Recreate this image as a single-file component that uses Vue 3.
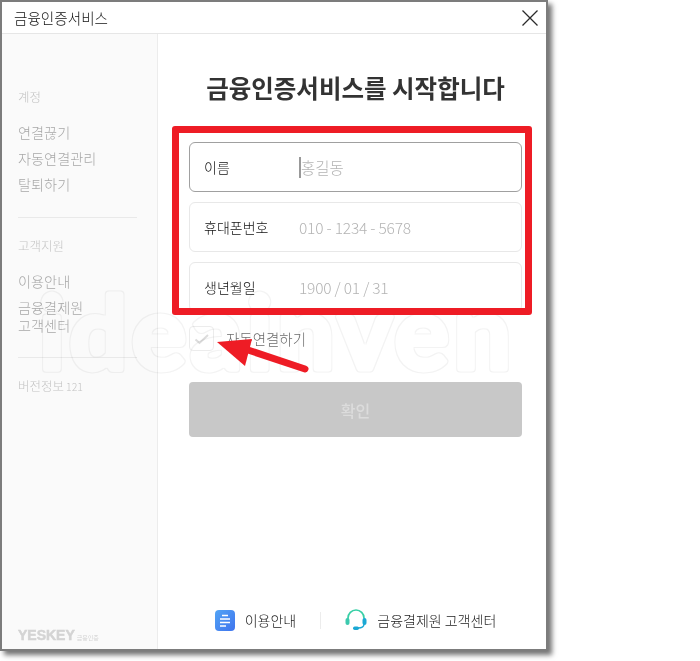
<script setup>
const fields = [
  { label: '이름', hint: '홍길동', active: true, num: false },
  { label: '휴대폰번호', hint: '010 - 1234 - 5678', active: false, num: true },
  { label: '생년월일', hint: '1900 / 01 / 31', active: false, num: true },
]
</script>

<template>
  <div class="stage">
    <div class="window">
      <header class="titlebar">
        <span class="title">금융인증서비스</span>
        <svg class="close" width="16" height="16" viewBox="0 0 16 16"><path d="M.5 .5L15.5 15.5M15.5 .5L.5 15.5" stroke="#2b2b2b" stroke-width="1.3" fill="none"/></svg>
      </header>
      <div class="body">
        <aside class="side">
          <div class="group">
            <div class="cap">계정</div>
            <ul class="links">
              <li>연결끊기</li>
              <li>자동연결관리</li>
              <li>탈퇴하기</li>
            </ul>
          </div>
          <div class="group rule">
            <div class="cap">고객지원</div>
            <ul class="links">
              <li>이용안내</li>
              <li class="two">금융결제원<br />고객센터</li>
            </ul>
          </div>
          <div class="group rule">
            <div class="cap">버전정보<small>121</small></div>
          </div>
          <div class="brand"><b>YESKEY</b><span>금융인증</span></div>
        </aside>
        <main class="main">
          <h1>금융인증서비스를 시작합니다</h1>
          <div class="fields">
            <div v-for="f in fields" :key="f.label" class="field" :class="{ active: f.active }">
              <span class="label">{{ f.label }}</span>
              <i v-if="f.active" class="caret"></i>
              <span class="hint" :class="{ num: f.num }">{{ f.hint }}</span>
            </div>
          </div>
          <label class="auto">
            <span class="box">
              <svg width="16" height="12" viewBox="0 0 16 12"><path d="M1.5 6.5L5.5 10L14 2" stroke="#dcdcdc" stroke-width="2" fill="none"/></svg>
            </span>
            <span class="autotext">자동연결하기</span>
          </label>
          <button class="ok" type="button">확인</button>
          <footer class="foot">
            <span class="fitem">
              <svg width="20" height="21" viewBox="0 0 20 21">
                <defs><linearGradient id="doc" x1="0" y1="0" x2="1" y2="1"><stop offset="0" stop-color="#52a4f5"/><stop offset="1" stop-color="#3f74ee"/></linearGradient></defs>
                <rect width="20" height="21" rx="4" fill="url(#doc)"/>
                <path d="M7 5.5H13M5 9H15M5 12.5H15M5 16H11" stroke="#fff" stroke-width="1.5"/>
              </svg>
              이용안내
            </span>
            <i class="sep"></i>
            <span class="fitem">
              <svg width="22" height="22" viewBox="0 0 22 22">
                <path d="M3 11V9a8 8 0 0 1 16 0" stroke="#38cfa6" stroke-width="1.7" fill="none"/>
                <path d="M19 9v6" stroke="#2fc0c4" stroke-width="1.2" fill="none"/>
                <rect x="0.5" y="9" width="4" height="7" rx="2" fill="#3cc9ae"/>
                <rect x="17.5" y="9" width="4" height="7" rx="2" fill="#1aa8d4"/>
                <path d="M19 15c0 3-3 4-6 4" stroke="#1aa8d4" stroke-width="1.4" fill="none"/>
                <rect x="8" y="17.5" width="6" height="3.5" rx="1.7" fill="#1aa8d4"/>
              </svg>
              금융결제원 고객센터
            </span>
          </footer>
        </main>
      </div>
      <svg class="watermark" width="500" height="120" viewBox="0 0 500 120" aria-hidden="true">
        <defs>
          <filter id="hollow" x="-5%" y="-10%" width="110%" height="120%">
            <feMorphology in="SourceAlpha" operator="erode" radius="1.2" result="inner"/>
            <feComposite in="SourceGraphic" in2="inner" operator="out"/>
          </filter>
        </defs>
        <text x="2" y="97" textLength="472" lengthAdjust="spacing" class="wmtext" filter="url(#hollow)">ideainven</text>
      </svg>
    </div>
    <div class="redbox"></div>
    <svg class="arrow" width="100" height="50" viewBox="0 0 100 50">
      <path d="M95 39L38 20" stroke="#ee1c25" stroke-width="7" stroke-linecap="round"/>
      <path d="M7 12L42 9L35 36Z" fill="#ee1c25"/>
    </svg>
  </div>
</template>

<style>
html, body { margin: 0; background: #fff; }
</style>

<style scoped>
.stage {
  position: relative;
  width: 700px;
  height: 661px;
  overflow: hidden;
  font-family: "Noto Sans CJK KR", "Noto Sans", sans-serif;
  font-weight: 300;
}
.window {
  position: relative;
  box-sizing: border-box;
  width: 548px;
  height: 651px;
  border: 2px solid #7c7c7c;
  background: #fff;
  box-shadow: 4px 4px 5px rgba(0, 0, 0, 0.55);
  display: flex;
  flex-direction: column;
  overflow: hidden;
}
.titlebar {
  height: 32px;
  flex: none;
  box-sizing: border-box;
  border-bottom: 1px solid #e6e6e6;
  display: flex;
  align-items: center;
  justify-content: space-between;
  padding: 0 8px 0 12px;
}
.title { font-size: 14.6px; color: #111; }
.close { display: block; margin-top: 1px; }
.body { flex: 1; display: flex; min-height: 0; }
.side {
  width: 156px;
  flex: none;
  box-sizing: border-box;
  background: #fafafa;
  border-right: 1px solid #ececec;
  padding: 53px 20px 0 16px;
  display: flex;
  flex-direction: column;
  position: relative;
}
.cap { font-size: 12.5px; line-height: 20px; color: #c4c4c4; }
.cap small { font-size: 10.5px; margin-left: 2px; }
.links { list-style: none; margin: 15px 0 0; padding: 0; font-size: 14.2px; color: #a8a8a8; }
.links li { line-height: 20px; margin-bottom: 6px; }
.links li.two { line-height: 18px; padding-top: 1px; }
.group { padding-bottom: 17px; }
.rule { border-top: 1px solid #e9e9e9; padding-top: 18px; }
.brand {
  position: absolute;
  left: 16px;
  bottom: 7px;
  display: flex;
  align-items: flex-end;
  gap: 2px;
  color: #d4d4d4;
}
.brand b { font-family: "Liberation Sans", sans-serif; font-weight: 700; font-size: 14px; line-height: 13px; -webkit-text-stroke: 0.5px #d4d4d4; }
.brand span { font-size: 6px; line-height: 9px; font-weight: 400; }
.main {
  flex: 1;
  position: relative;
  padding: 0 24px 0 31px;
  display: flex;
  flex-direction: column;
  min-width: 0;
}
h1 {
  margin: 36px 0 0;
  font-size: 24.5px;
  line-height: 36px;
  font-weight: 700;
  color: #333;
  text-align: center;
}
.fields { margin-top: 36px; display: flex; flex-direction: column; gap: 10px; }
.field {
  box-sizing: border-box;
  height: 50px;
  border: 1px solid #e8e8e8;
  border-radius: 6px;
  display: flex;
  align-items: center;
  padding-left: 14px;
  font-size: 14px;
  background: #fff;
}
.field.active { border-color: #a0a0a0; }
.label { width: 95px; flex: none; color: #111; }
.caret { width: 2px; height: 21px; background: #999; }
.hint { color: #b4b4b4; font-size: 15.5px; }
.hint.num { letter-spacing: -0.2px; }
.auto { margin-top: 14px; display: flex; align-items: center; gap: 12px; height: 25px; }
.box {
  box-sizing: border-box;
  width: 25px;
  height: 25px;
  border: 1px solid #ececec;
  border-radius: 4px;
  display: flex;
  align-items: center;
  justify-content: center;
}
.autotext { font-size: 14.5px; color: #6e6e6e; }
.ok {
  margin-top: 31px;
  height: 55px;
  border: 0;
  border-radius: 4px;
  background: #c8c8c8;
  color: #dcdcdc;
  font: 500 16px "Noto Sans CJK KR", sans-serif;
  width: 100%;
}
.foot {
  margin-top: auto;
  height: 40px;
  flex: none;
  display: flex;
  align-items: flex-start;
  justify-content: center;
  gap: 24px;
  font-size: 14px;
  color: #222;
}
.fitem { display: flex; align-items: center; gap: 10px; height: 22px; }
.sep { width: 1px; height: 17px; background: #ececec; margin-top: 3px; }
.watermark {
  position: absolute;
  left: 35px;
  top: 270px;
  mix-blend-mode: multiply;
  pointer-events: none;
}
.wmtext {
  font: 700 102px "Lato", sans-serif;
  fill: #f3f3f3;
  stroke: #f3f3f3;
  stroke-width: 7px;
  stroke-linejoin: round;
}
.redbox {
  position: absolute;
  left: 172px;
  top: 126px;
  box-sizing: border-box;
  width: 360px;
  height: 189px;
  border: 7px solid #ee1c25;
  border-radius: 3px;
}
.arrow { position: absolute; left: 210px; top: 330px; }
</style>
